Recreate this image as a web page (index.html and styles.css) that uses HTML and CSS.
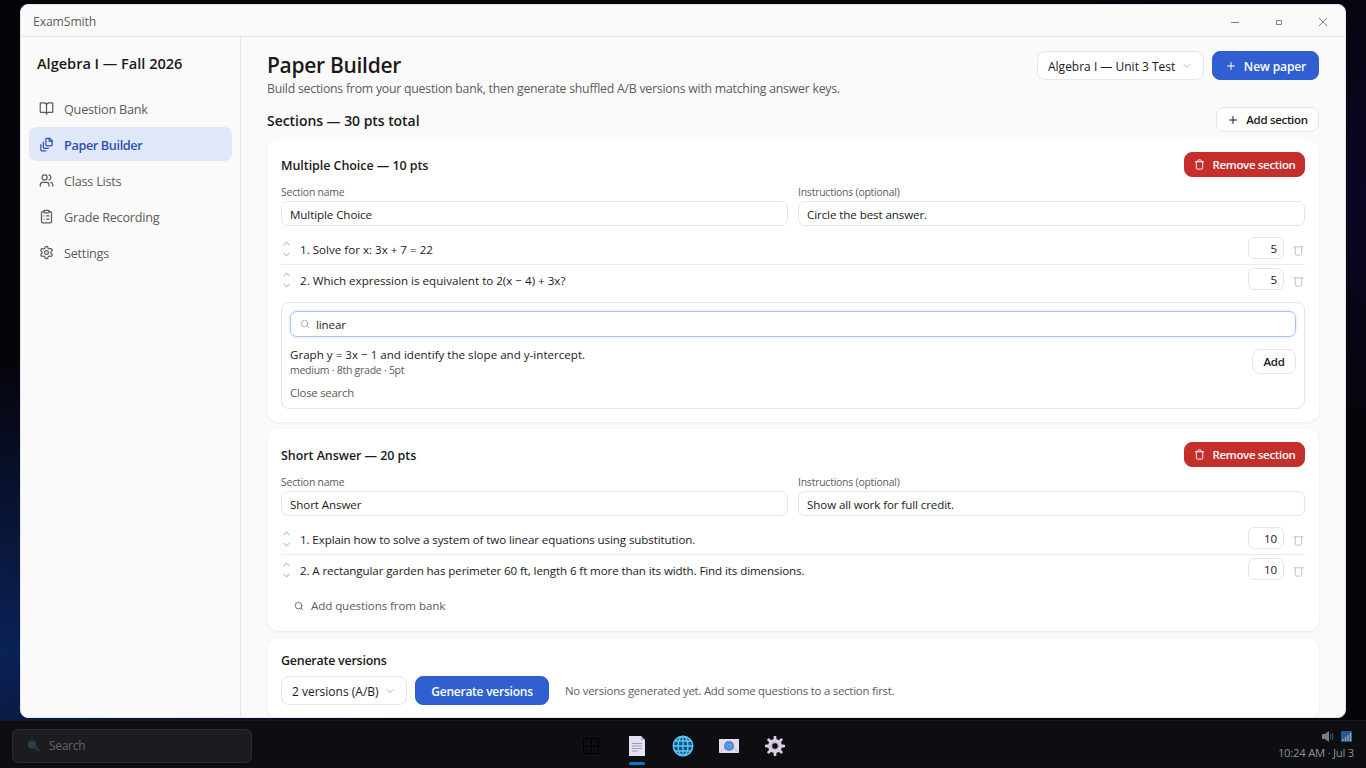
FILE: index.html
```html
<!DOCTYPE html>
<html lang="en">
<head>
<meta charset="utf-8">
<title>ExamSmith</title>
<link rel="stylesheet" href="styles.css">
</head>
<body>
<svg class="defs" width="0" height="0" aria-hidden="true">
  <symbol id="i-plus" viewBox="0 0 24 24"><path d="M5 12h14M12 5v14"/></symbol>
  <symbol id="i-down" viewBox="0 0 24 24"><path d="m6 9 6 6 6-6"/></symbol>
  <symbol id="i-up" viewBox="0 0 24 24"><path d="m18 15-6-6-6 6"/></symbol>
  <symbol id="i-trash" viewBox="0 0 24 24"><path d="M3 6h18M19 6v14c0 1-1 2-2 2H7c-1 0-2-1-2-2V6M8 6V4c0-1 1-2 2-2h4c1 0 2 1 2 2v2"/></symbol>
  <symbol id="i-bin" viewBox="0 0 24 24"><path d="M2 4h20M19 4v16c0 1-1 2-2 2H7c-1 0-2-1-2-2V4"/></symbol>
  <symbol id="i-search" viewBox="0 0 24 24"><circle cx="11" cy="11" r="8"/><path d="m21 21-4.300-4.300"/></symbol>
</svg>
<div class="window">
  <header class="titlebar">
    <span class="app-name">ExamSmith</span>
    <div class="controls">
      <svg viewBox="0 0 10 10"><path d="M1 5.500h8"/></svg>
      <svg viewBox="0 0 10 10"><path d="M2.500 3.500h5v4h-5z"/></svg>
      <svg viewBox="0 0 10 10"><path d="M1 1l8 8M9 1l-8 8"/></svg>
    </div>
  </header>
  <div class="body">
    <nav class="sidebar">
      <div class="course">Algebra I — Fall 2026</div>
      <a class="nav-item"><svg class="icon" viewBox="0 0 24 24"><path d="M12 7v14M3 18a1 1 0 0 1-1-1V4a1 1 0 0 1 1-1h5a4 4 0 0 1 4 4 4 4 0 0 1 4-4h5a1 1 0 0 1 1 1v13a1 1 0 0 1-1 1h-6a3 3 0 0 0-3 3 3 3 0 0 0-3-3z"/></svg><span>Question Bank</span></a>
      <a class="nav-item active"><svg class="icon" viewBox="0 0 24 24"><path d="M21 7h-3a2 2 0 0 1-2-2V2"/><path d="M21 6v6.5c0 .8-.7 1.5-1.5 1.5h-7c-.8 0-1.5-.7-1.5-1.5v-9c0-.8.7-1.5 1.5-1.5H17Z"/><path d="M7 8v8.8c0 .3.2.6.4.8.2.2.5.4.8.4H15"/><path d="M3 12v8.8c0 .3.2.6.4.8.2.2.5.4.8.4H11"/></svg><span>Paper Builder</span></a>
      <a class="nav-item"><svg class="icon" viewBox="0 0 24 24"><path d="M16 21v-2a4 4 0 0 0-4-4H6a4 4 0 0 0-4 4v2"/><circle cx="9" cy="7" r="4"/><path d="M22 21v-2a4 4 0 0 0-3-3.87M16 3.13a4 4 0 0 1 0 7.75"/></svg><span>Class Lists</span></a>
      <a class="nav-item"><svg class="icon" viewBox="0 0 24 24"><rect x="8" y="2" width="8" height="4" rx="1"/><path d="M16 4h2a2 2 0 0 1 2 2v14a2 2 0 0 1-2 2H6a2 2 0 0 1-2-2V6a2 2 0 0 1 2-2h2M12 11h4M12 16h4M8 11h.01M8 16h.01"/></svg><span>Grade Recording</span></a>
      <a class="nav-item"><svg class="icon" viewBox="0 0 24 24"><path d="M9.67 4.14a2.34 2.34 0 0 1 4.66 0 2.34 2.34 0 0 0 3.32 1.91 2.34 2.34 0 0 1 2.33 4.03 2.34 2.34 0 0 0 0 3.83 2.34 2.34 0 0 1-2.33 4.03 2.34 2.34 0 0 0-3.32 1.92 2.34 2.34 0 0 1-4.66 0 2.34 2.34 0 0 0-3.32-1.92 2.34 2.34 0 0 1-2.33-4.03 2.34 2.34 0 0 0 0-3.83 2.34 2.34 0 0 1 2.33-4.03 2.34 2.34 0 0 0 3.32-1.91"/><circle cx="12" cy="12" r="3"/></svg><span>Settings</span></a>
    </nav>
    <main class="main">
      <div class="page-head">
        <div>
          <h1>Paper Builder</h1>
          <p class="subtitle">Build sections from your question bank, then generate shuffled A/B versions with matching answer keys.</p>
        </div>
        <div class="actions">
          <div class="select unit"><span>Algebra I — Unit 3 Test</span><svg class="icon"><use href="#i-down"/></svg></div>
          <button class="btn primary new"><svg class="icon"><use href="#i-plus"/></svg><span>New paper</span></button>
        </div>
      </div>
      <div class="section-head">
        <h2>Sections — 30 pts total</h2>
        <button class="btn small add-section"><svg class="icon"><use href="#i-plus"/></svg><span>Add section</span></button>
      </div>

      <section class="card first">
        <div class="card-head"><h3>Multiple Choice — 10 pts</h3><button class="btn small danger"><svg class="icon"><use href="#i-trash"/></svg><span>Remove section</span></button></div>
        <div class="fields">
          <div><label>Section name</label><div class="input">Multiple Choice</div></div>
          <div><label>Instructions (optional)</label><div class="input">Circle the best answer.</div></div>
        </div>
        <div class="questions">
          <div class="question"><span class="move"><svg class="icon"><use href="#i-up"/></svg><svg class="icon"><use href="#i-down"/></svg></span><span class="text math">1. Solve for x: 3x + 7 = 22</span><span class="points">5</span><svg class="icon bin"><use href="#i-bin"/></svg></div>
          <div class="question"><span class="move"><svg class="icon"><use href="#i-up"/></svg><svg class="icon"><use href="#i-down"/></svg></span><span class="text math">2. Which expression is equivalent to 2(x − 4) + 3x?</span><span class="points">5</span><svg class="icon bin"><use href="#i-bin"/></svg></div>
        </div>
        <div class="finder">
          <div class="search"><svg class="icon"><use href="#i-search"/></svg><span>linear</span></div>
          <div class="result">
            <div><div class="result-title math">Graph y = 3x − 1 and identify the slope and y-intercept.</div><div class="meta">medium · 8th grade · 5pt</div></div>
            <button class="btn small add">Add</button>
          </div>
          <div class="close">Close search</div>
        </div>
      </section>

      <section class="card second">
        <div class="card-head"><h3>Short Answer — 20 pts</h3><button class="btn small danger"><svg class="icon"><use href="#i-trash"/></svg><span>Remove section</span></button></div>
        <div class="fields">
          <div><label>Section name</label><div class="input">Short Answer</div></div>
          <div><label>Instructions (optional)</label><div class="input">Show all work for full credit.</div></div>
        </div>
        <div class="questions">
          <div class="question"><span class="move"><svg class="icon"><use href="#i-up"/></svg><svg class="icon"><use href="#i-down"/></svg></span><span class="text">1. Explain how to solve a system of two linear equations using substitution.</span><span class="points">10</span><svg class="icon bin"><use href="#i-bin"/></svg></div>
          <div class="question"><span class="move"><svg class="icon"><use href="#i-up"/></svg><svg class="icon"><use href="#i-down"/></svg></span><span class="text">2. A rectangular garden has perimeter 60 ft, length 6 ft more than its width. Find its dimensions.</span><span class="points">10</span><svg class="icon bin"><use href="#i-bin"/></svg></div>
        </div>
        <div class="add-questions"><svg class="icon"><use href="#i-search"/></svg><span>Add questions from bank</span></div>
      </section>

      <section class="card versions">
        <h3>Generate versions</h3>
        <div class="version-row">
          <div class="select count"><span>2 versions (A/B)</span><svg class="icon"><use href="#i-down"/></svg></div>
          <button class="btn primary generate"><span>Generate versions</span></button>
          <span class="note">No versions generated yet. Add some questions to a section first.</span>
        </div>
      </section>
    </main>
  </div>
</div>

<footer class="taskbar">
  <div class="task-search">
    <svg width="14" height="14" viewBox="0 0 14 14"><path d="M8.500 8.500l2.800 2.600" stroke="#3a2d3c" stroke-width="2.400" stroke-linecap="round"/><circle cx="5" cy="5.500" r="4.200" fill="#263f4b"/></svg>
    <span>Search</span>
  </div>
  <div class="apps">
    <span class="app"><svg width="20" height="20" viewBox="0 0 20 20" fill="none" stroke="#000" stroke-width="1"><path d="M2.500 2.500h15v15h-15zM10.500 2.500v15M2.500 10.500h15"/></svg></span>
    <span class="app open"><svg width="20" height="20" viewBox="0 0 20 20"><path d="M2 0h12l4 4v16H2z" fill="#e6dff0"/><path d="M14 0l4 4h-4z" fill="#b9b0c6"/><path d="M5 7.500h10M5 10h10M5 12.500h10M5 15h6" stroke="#a39bad" stroke-width="1"/></svg></span>
    <span class="app"><svg width="22" height="22" viewBox="0 0 22 22" fill="none"><circle cx="11" cy="11" r="9.700" fill="#155387" stroke="#5ec8f5" stroke-width="1.500"/><ellipse cx="11" cy="11" rx="5" ry="9.700" stroke="#5ec8f5" stroke-width="1.300"/><path d="M11 1v20M1 11h20M3 6h16M3 16h16" stroke="#5ec8f5" stroke-width="1.300"/></svg></span>
    <span class="app"><svg width="20" height="14" viewBox="0 0 20 14"><path d="M0 0h20v14H0z" fill="#e4daee"/><path d="M0 14l7-6M20 14l-7-6" stroke="#c9bdd5"/><circle cx="10" cy="7" r="5" fill="#3f7fd4"/><circle cx="10" cy="7" r="1.700" fill="none" stroke="#8fb6ea" stroke-width=".8"/><path d="M11.800 5v2.600c0 1.300 1.500 1 1.500-.6A3.300 3.300 0 1 0 12 9.700" fill="none" stroke="#8fb6ea" stroke-width=".6"/></svg></span>
    <span class="app"><svg width="20" height="20" viewBox="0 0 20 20" fill="none" stroke="#d8cfe3"><circle cx="10" cy="10" r="5" stroke-width="4"/><path d="M10 1v3M10 16v3M1 10h3M16 10h3M3.700 3.700l2 2M14.300 14.300l2 2M3.700 16.300l2-2M14.300 5.700l2-2" stroke-width="2.800" stroke-linecap="round"/><circle cx="10" cy="10" r="3.200" stroke="#8f8799" stroke-width=".8"/></svg></span>
  </div>
  <div class="tray">
    <div class="tray-icons">
      <svg width="12" height="11" viewBox="0 0 12 11"><path d="M0 3h3l4-3v11L3 8H0z" fill="#807b82"/><path d="M8.500 3.500q1.200 2 0 4M10 2q2.200 3.500 0 7" fill="none" stroke="#2d6b91"/></svg>
      <svg width="11" height="11" viewBox="0 0 11 11"><path d="M0 0h11v11H0z" fill="#28598c"/><path d="M2 10V8M4.500 10V6M7 10V4M9.500 10V2" stroke="#9aa6b6" stroke-width="1.300"/></svg>
    </div>
    <div class="clock">10:24 AM · Jul 3</div>
  </div>
</footer>
</body>
</html>
```
FILE: styles.css
```css
* { box-sizing: border-box; }
body {
  margin: 0;
  width: 1366px;
  height: 768px;
  overflow: hidden;
  position: relative;
  display: flex;
  flex-direction: column;
  font-family: "Open Sans", "Noto Sans", sans-serif;
  font-size: 12px;
  color: #1a1a1a;
  background:
    radial-gradient(ellipse 420px 290px at 0 650px, #0b2257 0%, rgba(11, 34, 87, 0) 100%),
    radial-gradient(ellipse 500px 230px at 1366px 190px, #0c0523 0%, rgba(12, 5, 35, 0) 100%),
    #05040b;
}
h1, h2, h3, p { margin: 0; }
h1, h2, h3 { font-weight: 570; white-space: nowrap; }
.defs { position: absolute; }
.icon {
  flex: none;
  fill: none;
  stroke: currentColor;
  stroke-width: 2;
  stroke-linecap: round;
  stroke-linejoin: round;
}

.window {
  margin: 4px 20px 0;
  height: 714px;
  flex: none;
  display: flex;
  flex-direction: column;
  border: 1px solid #e6e6e6;
  border-radius: 8px;
  overflow: hidden;
  background: #fafafa;
}
.titlebar {
  height: 32px;
  flex: none;
  display: flex;
  align-items: center;
  justify-content: space-between;
  padding: 2px 0 0 12px;
  border-bottom: 1px solid #e5e5e5;
  color: #5c5c5c;
}
.app-name { font-size: 12.2px; letter-spacing: -0.1px; }
.controls { display: flex; }
.controls svg {
  width: 10px;
  height: 10px;
  margin: 0 17px;
  fill: none;
  stroke: #808080;
  stroke-width: 1;
}
.body { flex: 1; min-height: 0; display: flex; }

.sidebar {
  width: 220px;
  flex: none;
  padding: 10px 8px;
  border-right: 1px solid #e5e5e5;
  display: flex;
  flex-direction: column;
  gap: 2px;
}
.course {
  height: 42px;
  padding: 6px 8px 0;
  line-height: 20px;
  font-size: 14.6px;
  letter-spacing: -0.03px;
  font-weight: 570;
  white-space: nowrap;
}
.nav-item {
  height: 34px;
  flex: none;
  display: flex;
  align-items: center;
  gap: 10px;
  padding: 2px 10px 0;
  border-radius: 8px;
  font-size: 12.7px;
  letter-spacing: -0.25px;
  color: #5c5c5c;
}
.nav-item .icon { width: 15px; height: 15px; margin-top: -2px; }
.nav-item.active { background: #e0e7f9; color: #2b50b4; font-weight: 600; letter-spacing: -0.38px; }

.main { flex: 1; min-width: 0; padding: 14px 26px 0; overflow: hidden; }
.page-head { display: flex; justify-content: space-between; height: 56px; }
h1 { font-size: 21px; line-height: 29px; letter-spacing: -0.3px; }
.subtitle { font-size: 12.3px; letter-spacing: -0.24px; line-height: 17px; color: #5c5c5c; white-space: nowrap; }
.actions { display: flex; gap: 8px; }
.select, .btn {
  display: flex;
  align-items: center;
  justify-content: center;
  height: 29px;
  border: 1px solid #e5e5e5;
  border-radius: 8px;
  background: #fff;
  font: inherit;
  color: #1a1a1a;
  padding: 0;
  white-space: nowrap;
}
.select { justify-content: space-between; padding: 0 10px; }
.select span, .primary span { padding-top: 1px; }
.select .icon { width: 12px; height: 12px; color: #b5b5b5; }
.unit { width: 167px; }
.count { width: 126px; }
.btn { font-weight: 600; gap: 7px; }
.btn .icon { width: 12px; height: 12px; }
.btn.primary { background: #2f5fd0; border-color: #2f5fd0; color: #fff; }
.new { width: 107px; }
.new span { letter-spacing: -0.1px; }
.generate { width: 134px; letter-spacing: -0.24px; }
.btn.small { height: 25px; font-size: 11.5px; letter-spacing: -0.33px; }
.btn.danger { width: 121px; padding-left: 1px; background: #c42f2c; border-color: #c42f2c; color: #fff; }
.danger .icon { width: 11px; height: 11px; }
.btn.add-section { width: 103px; font-weight: 570; }
.section-head { display: flex; justify-content: space-between; height: 32px; }
h2 { font-size: 14px; line-height: 27px; letter-spacing: -0.05px; }

.card {
  background: #fff;
  border-radius: 12px;
  padding: 13px 14px;
  box-shadow: 0 1px 3px rgba(0, 0, 0, 0.07);
}
.card.first { height: 283px; }
.card.second { height: 202px; margin-top: 7px; }
.card.versions { height: 80px; margin-top: 7px; }
.card-head { display: flex; justify-content: space-between; height: 33px; }
h3 { font-size: 12.5px; line-height: 27px; letter-spacing: -0.06px; }
.fields { display: grid; grid-template-columns: 1fr 1fr; gap: 10px; }
label { display: block; font-size: 10.4px; letter-spacing: -0.2px; line-height: 14px; height: 16px; color: #5c5c5c; }
.input {
  height: 25px;
  line-height: 25px;
  padding: 0 8px;
  border: 1px solid #e5e5e5;
  border-radius: 7px;
  font-size: 11.6px;
  letter-spacing: -0.1px;
}
.questions { padding-top: 8px; }
.question { height: 30px; display: flex; align-items: center; font-size: 11.6px; letter-spacing: -0.11px; }
.question:first-child { height: 31px; border-bottom: 1px solid #ebebeb; }
.move { width: 11px; margin-right: 8px; display: flex; flex-direction: column; color: #c2c2c2; }
.move .icon { width: 11px; height: 11px; stroke-width: 2.4; }
.text { flex: 1; white-space: nowrap; }
.text.math, .math { letter-spacing: 0; }
.points {
  width: 36px;
  height: 22px;
  line-height: 21px;
  margin-bottom: 2px;
  border: 1px solid #e5e5e5;
  border-radius: 6px;
  padding-right: 6px;
  text-align: right;
}
.bin { width: 11px; height: 11px; margin: 2px 1px 0 9px; color: #bdbdbd; }

.finder {
  height: 107px;
  margin-top: 7px;
  padding: 8px;
  border: 1px solid #e5e5e5;
  border-radius: 8px;
}
.search {
  height: 26px;
  display: flex;
  align-items: center;
  gap: 6px;
  padding: 0 9px;
  border: 1px solid #aac0ee;
  border-radius: 7px;
  box-shadow: 0 0 0 2px #f1f5fd;
  font-size: 11.5px;
  letter-spacing: -0.1px;
}
.search .icon { width: 10px; height: 10px; color: #a3a3a3; }
.result { display: flex; justify-content: space-between; padding-top: 10px; height: 46px; }
.result-title { font-size: 11.6px; line-height: 16px; }
.meta { font-size: 10.5px; letter-spacing: -0.26px; line-height: 14px; color: #5c5c5c; }
.add { width: 44px; margin-top: 2px; }
.close { font-size: 11.4px; letter-spacing: -0.25px; line-height: 20px; color: #5c5c5c; }
.add-questions {
  display: flex;
  align-items: center;
  gap: 7px;
  height: 25px;
  margin-top: 8px;
  padding-left: 13px;
  font-size: 11.6px;
  letter-spacing: -0.1px;
  color: #5c5c5c;
}
.add-questions .icon { width: 10px; height: 10px; }
.versions h3 { line-height: 20px; height: 25px; letter-spacing: -0.26px; }
.version-row { display: flex; gap: 8px; align-items: center; }
.note { margin-left: 8px; font-size: 11.4px; letter-spacing: -0.23px; color: #5c5c5c; white-space: nowrap; }

.taskbar {
  height: 48px;
  margin-top: 2px;
  flex: none;
  display: grid;
  grid-template-columns: 1fr auto 1fr;
  align-items: center;
  padding: 2px 12px 0;
  border-top: 1px solid #16181d;
  background: #0d0e11;
}
.task-search {
  width: 240px;
  height: 34px;
  display: flex;
  align-items: center;
  gap: 8px;
  padding: 0 14px;
  border: 1px solid #2a2b2f;
  border-radius: 6px;
  background: #1b1c20;
  color: #636468;
  letter-spacing: -0.3px;
}
.apps { display: flex; gap: 6px; }
.app { position: relative; width: 40px; height: 40px; display: flex; align-items: center; justify-content: center; }
.open::after {
  content: "";
  position: absolute;
  left: 12px;
  bottom: 1px;
  width: 16px;
  height: 3px;
  border-radius: 2px;
  background: #0876d1;
}
.tray { display: flex; flex-direction: column; align-items: flex-end; gap: 2px; color: #929292; }
.tray-icons { display: flex; gap: 7px; padding-right: 2px; }
.clock { font-size: 11.3px; letter-spacing: -0.25px; line-height: 17px; }
```
